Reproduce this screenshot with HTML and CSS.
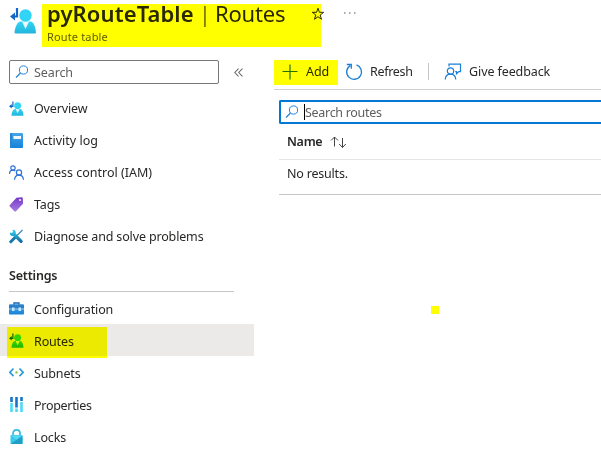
FILE: index.html
```
<!DOCTYPE html>
<html lang="en">
<head>
<meta charset="utf-8">
<title>pyRouteTable | Routes</title>
<link rel="stylesheet" href="styles.css">
</head>
<body>
<svg class="defs" width="0" height="0" aria-hidden="true">
  <defs>
    <linearGradient id="cyan" x1="0" y1="0" x2="0" y2="1"><stop offset="0" stop-color="#32d4f5"/><stop offset="1" stop-color="#22b5dc"/></linearGradient>
    <linearGradient id="blue" x1="0" y1="0" x2="0" y2="1"><stop offset="0" stop-color="#48a5e8"/><stop offset="1" stop-color="#1683d8"/></linearGradient>
    <linearGradient id="purple" x1="0" y1="0" x2="0" y2="1"><stop offset="0" stop-color="#7637c8"/><stop offset="1" stop-color="#a67be0"/></linearGradient>
    <linearGradient id="tool" x1="0" y1="0" x2="0" y2="1"><stop offset="0" stop-color="#32d4f5"/><stop offset="1" stop-color="#12609f"/></linearGradient>
    <symbol id="route" viewBox="0 0 27 27">
      <path d="M7 1v8.500H2.500" fill="none" stroke="#1169c5" stroke-width="2.200"/><path d="M5 5.500v8L0 9.500z" fill="#1169c5"/>
      <path d="M4.500 25.500C5 20 7.500 14.500 10.500 14.500h10c3 0 5 5.500 5.500 11q0 1-1 1H5.500q-1 0-1-1z" fill="url(#cyan)"/>
      <path d="M12 14.500h7L15.500 22z" fill="#eafaff"/><circle cx="15.500" cy="8.500" r="6.200" fill="#32d4f5"/>
    </symbol>
    <symbol id="search" viewBox="0 0 14 14"><circle cx="8.500" cy="5" r="4.100" fill="none" stroke="#2583d6" stroke-width="1"/><path d="M5.500 8 1 12.500" stroke="#2583d6" stroke-width="1.200"/></symbol>
  </defs>
</svg>
<header class="header">
  <svg class="header-icon"><use href="#route"/></svg>
  <div class="heading">
    <h1><b>pyRouteTable</b><span class="bar">|</span><span class="page">Routes</span></h1>
    <p>Route table</p>
  </div>
  <svg class="star" viewBox="0 0 14 14"><path d="M7 1.200 8.400 5.300h4.300L9.200 8l1.300 4.300L7 9.700l-3.500 2.600L4.800 8 1.300 5.300h4.300z" fill="none" stroke="#2b2b2b" stroke-width="1"/></svg>
  <svg class="dots" viewBox="0 0 12 2"><path d="M0 .5h1.500v1H0zM5 .5h1.500v1H5zM10 .5h1.500v1H10z" fill="#555"/></svg>
  <i class="marker marker-title"></i>
</header>
<div class="body">
  <aside class="side">
    <div class="side-search"><div class="box"><svg><use href="#search"/></svg><span>Search</span></div>
      <svg class="collapse" viewBox="0 0 8 8"><path d="M4 .5.700 4 4 7.500M7.500.5 4.200 4l3.300 3.500" fill="none" stroke="#666" stroke-width=".9"/></svg></div>
    <nav>
      <a><svg><use href="#route"/></svg><span>Overview</span></a>
      <a><svg viewBox="0 0 15 15"><rect x="1" width="13" height="15" rx="1" fill="url(#blue)"/><path d="M1 1q0-1 1-1h1v15H2q-1 0-1-1z" fill="#2a86d2"/><rect x="4.500" y="3" width="7.500" height="3" fill="#f1f8ff"/></svg><span class="wide">Activity log</span></a>
      <a><svg viewBox="0 0 15 15" fill="none" stroke="#2b70d9" stroke-width="1.200"><circle cx="4" cy="3" r="2.200"/><path d="M.5 9C.5 6.500 2 5.200 4 5.200q1.500 0 2.300.8"/><circle cx="10" cy="7.500" r="2.600"/><path d="M5.500 14.700c.3-3 2-4.500 4.500-4.500s4.200 1.500 4.500 4.500"/></svg><span class="wide">Access control (IAM)</span></a>
      <a><svg viewBox="0 0 15 15"><path d="M7.500.8 12.500.3q1.200 0 1.300 1.200l.2 5.200-7 7.500q-.8.7-1.600 0L.8 9.500q-.6-.8 0-1.500z" fill="url(#purple)"/><circle cx="11" cy="3" r="1.100" fill="#f4e9ff"/></svg><span>Tags</span></a>
      <a><svg viewBox="0 0 15 15"><path d="m13.500 1-8 8" stroke="#4189b5" stroke-width="1.300"/><path d="m6.500 8-4.700 4.800" stroke="#1779aa" stroke-width="3" stroke-linecap="round"/><path d="M1 3.500 3 4l1-1L3.500.8C6 .5 7.300 2.500 6.700 4.500l6.800 7q.7 1-.3 2t-2 .2L4.300 7C2 7.500.5 6 1 3.500z" fill="url(#tool)"/></svg><span>Diagnose and solve problems</span></a>
    </nav>
    <h2>Settings</h2>
    <nav class="settings">
      <a><svg viewBox="0 0 15 15"><path d="M5 4V2h5v2" fill="none" stroke="#1769b5" stroke-width="1.400"/><rect y="3.500" width="15" height="10" rx="1" fill="url(#blue)"/><path d="M0 4.500q0-1 1-1h13q1 0 1 1v3H0z" fill="#2c7fc9"/><path d="M0 7.500h15v1H0z" fill="#8bcaf5"/><rect x="3" y="6.500" width="2.500" height="3.500" fill="#c9e7fa"/><rect x="9.500" y="6.500" width="2.500" height="3.500" fill="#c9e7fa"/></svg><span>Configuration</span></a>
      <a class="current"><svg><use href="#route"/></svg><span>Routes</span><i class="marker marker-routes"></i></a>
      <a><svg viewBox="0 0 15 15" fill="none" stroke-width="1.700"><path d="M4.500 3.500.9 7.400l3.600 3.800" stroke="#2c9ddb"/><path d="m10.500 3.500 3.600 3.900-3.600 3.800" stroke="#2c9ddb"/><circle cx="7.500" cy="7.400" r="1.200" fill="#86c440"/></svg><span>Subnets</span></a>
      <a><svg viewBox="0 0 15 15"><path d="M1.200 0h2.600v5H1.200zM6.200 0h2.600v10.500H6.200zM11.200 0h2.600v4h-2.600z" fill="#1374ca"/><path d="M1.200 6h2.600v9H1.200zM6.200 11.500h2.600V15H6.200zM11.200 5h2.600v10h-2.600z" fill="#4bdbf4"/></svg><span class="tight">Properties</span></a>
      <a><svg viewBox="0 0 15 15"><path d="M4 7V4.500C4 2.300 5.500.9 7.500.9S11 2.300 11 4.500V7" fill="none" stroke="#32bbdf" stroke-width="1.700"/><rect x="1.500" y="6" width="12" height="9" rx=".8" fill="#38c8e8"/><path d="M1.500 15 13.500 7v8z" fill="#1f9fc6"/><path d="m2 6.500 5.500 4 5.500-4" fill="#54d9f3"/></svg><span>Locks</span></a>
    </nav>
  </aside>
  <main>
    <div class="toolbar">
      <svg class="plus" viewBox="0 0 16 16"><path d="M8 .5v15M.5 7.500h15" stroke="#26708e" stroke-width="1.200"/></svg><span class="add">Add</span>
      <svg class="refresh" viewBox="0 0 18 18" fill="none" stroke="#1b7fd5" stroke-width="1.300"><path d="M11.500 1.900A7.400 7.400 0 1 1 5.200 2.600M1.800 1.500h4.500v4.300"/></svg><span class="refresh-text">Refresh</span>
      <i class="divider"></i>
      <svg class="feedback" viewBox="0 0 18 18" fill="none" stroke="#1b7fd5" stroke-width="1.200"><circle cx="6.500" cy="8" r="3.200"/><path d="M1.200 16.500c.3-3.500 2.300-5.300 5.300-5.300s5 1.800 5.300 5.300M5 3.500V1.100h11.500v7.500h-1.700l-2.300 2.200V8.600h-1.300"/></svg><span>Give feedback</span>
      <i class="marker marker-add"></i>
    </div>
    <div class="route-search"><svg><use href="#search"/></svg><i class="caret"></i><span>Search routes</span></div>
    <div class="table">
      <div class="table-head"><b>Name</b><svg viewBox="0 0 17 12" fill="none" stroke="#444" stroke-width="1"><path d="M4.500 10.500V1M1 4.500 4.500 1 8 4.500M12.500 2v9.500M9.200 8l3.300 3.500L15.800 8"/></svg></div>
      <div class="table-row">No results.</div>
    </div>
  </main>
</div>
<i class="marker marker-dot"></i>
</body>
</html>
```
FILE: styles.css
```
* { box-sizing: border-box; }
body {
  margin: 0; height: 467px; overflow: hidden; position: relative; background: #fff;
  color: #292827; font: 12.5px/20px "Noto Sans", "Open Sans", sans-serif; letter-spacing: -.1px;
}
.defs { position: absolute; }
svg { display: block; flex: none; }
span { white-space: nowrap; }

.header { position: relative; display: flex; height: 57px; padding-left: 10px; }
.header-icon { width: 27px; height: 27px; margin-top: 7px; }
.heading { width: 263px; margin-left: 10px; }
h1 { display: flex; margin: 0; height: 27px; font-size: 22px; line-height: 26px; font-weight: 400; white-space: nowrap; }
h1 b { width: 154px; font-weight: 600; letter-spacing: .1px; }
.bar { width: 14px; font-weight: 300; margin-left: -2px; margin-right: 2px; }
.page { letter-spacing: -.2px; }
.heading p { margin: 0; font-size: 11px; line-height: 20px; color: #605e5c; letter-spacing: .15px; }
.star { width: 14px; height: 14px; margin: 7px 0 0 1px; }
.dots { width: 12px; height: 2px; margin: 12px 0 0 19px; }

.body { display: flex; }
.side { width: 254px; padding-top: 3px; }
.side-search { display: flex; align-items: center; height: 24px; margin: 0 0 8px 9px; }
.box { display: flex; align-items: center; width: 210px; height: 24px; padding-left: 5px; border: 1px solid #777; border-radius: 2px; color: #605e5c; }
.box svg { width: 14px; height: 14px; margin-right: 5px; }
.box span, .route-search span, .toolbar span { padding-top: 1px; }
.collapse { width: 9px; height: 9px; margin-left: 15px; }
nav a { position: relative; display: flex; align-items: center; height: 32px; padding-left: 9px; }
nav a svg { width: 15px; height: 15px; margin-right: 10px; }
nav span { padding-top: 2px; letter-spacing: -.15px; }
nav .wide { letter-spacing: 0; }
.settings span { padding-top: 3px; }
.settings .tight { letter-spacing: -.3px; }
nav .current { background: #ebeae9; }
h2 { height: 40px; margin: 0 20px 0 9px; padding-top: 14px; border-bottom: 1px solid #c8c6c4; font-size: 12.5px; line-height: 20px; font-weight: 600; letter-spacing: -.2px; }

main { flex: 1; padding-left: 20px; }
.toolbar { position: relative; display: flex; align-items: center; height: 33px; padding: 0 0 3px 8px; border-bottom: 1px solid #d2d0ce; }
.plus { width: 16px; height: 16px; margin-right: 8px; }
.add { width: 39px; }
.refresh { width: 18px; height: 18px; margin-right: 7px; }
.refresh-text { width: 58px; letter-spacing: -.3px; }
.divider { width: 1px; height: 17px; margin-right: 15px; background: #c8c6c4; }
.feedback { width: 18px; height: 18px; margin-right: 7px; }
.route-search { display: flex; align-items: center; height: 24px; margin: 10px 0 0 5px; padding-left: 4px; border: 2px solid #0078d4; border-right: 0; border-radius: 2px 0 0 2px; color: #605e5c; }
.route-search span { letter-spacing: -.3px; }
.route-search svg { width: 14px; height: 14px; margin-right: 5px; }
.caret { width: 1px; height: 16px; background: #000; }
.table { margin-left: 5px; }
.table-head { display: flex; align-items: center; height: 36px; padding-left: 8px; border-bottom: 1px solid #e5e5e5; }
.table-head b { width: 43px; font-weight: 600; letter-spacing: -.3px; }
.table-head svg { width: 17px; height: 12px; }
.table-row { height: 35px; padding: 4px 0 0 8px; border-bottom: 1px solid #c8c6c4; letter-spacing: -.2px; }

.marker { position: absolute; background: #ff0; mix-blend-mode: multiply; }
.marker-title { left: 42px; top: 4px; width: 279px; height: 43px; }
.marker-add { left: 0; top: 3px; width: 64px; height: 25px; }
.marker-routes { left: 7px; top: 3px; width: 100px; height: 31px; z-index: 1; }
.marker-dot { left: 431px; top: 306px; width: 8px; height: 8px; }
```
